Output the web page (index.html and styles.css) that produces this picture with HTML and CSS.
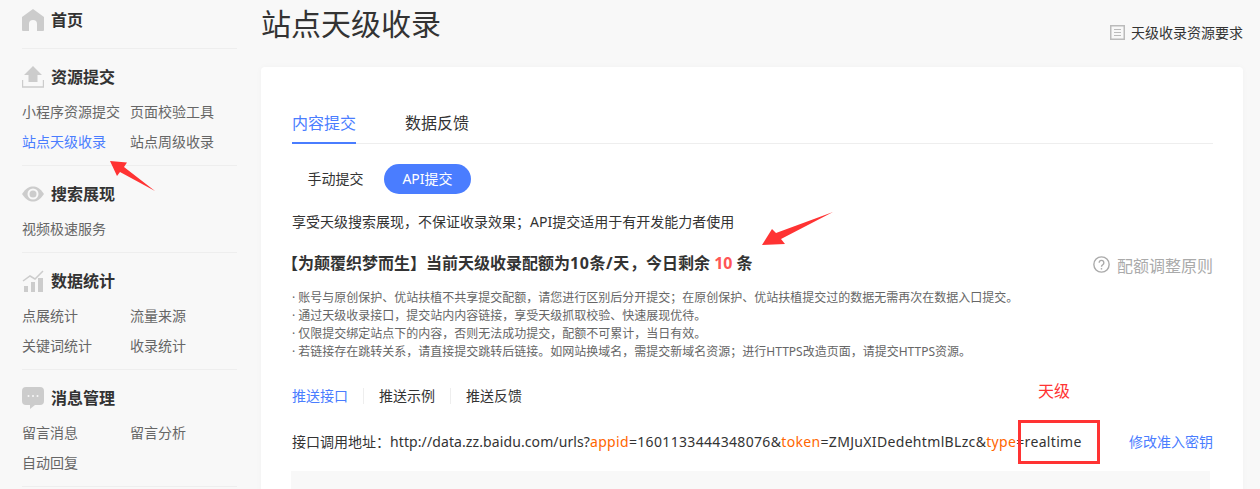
FILE: index.html
```html
<!DOCTYPE html>
<html lang="zh-CN">
<head>
    <meta charset="UTF-8">
    <title>站点天级收录</title>
    <link rel="stylesheet" href="styles.css">
</head>
<body>
    <!-- Sidebar -->
    <div class="sidebar">
        <div class="nav-group nav-home">
            <div class="nav-title">
                <svg class="nav-icon" viewBox="0 0 22 22"><path d="M11 0 L22 8 V21 a1 1 0 0 1 -1 1 H15 V15 a4 4 0 0 0 -8 0 V22 H1 a1 1 0 0 1 -1 -1 V8 Z" fill="#ccc"/></svg>
                <span>首页</span>
            </div>
        </div>
        <div class="nav-group">
            <div class="nav-title">
                <svg class="nav-icon" viewBox="0 0 22 22"><path d="M11 0 L20 9 H15.5 V16 H6.5 V9 H2 Z" fill="#ccc"/><path d="M0.5 14 V21 H21.5 V14" fill="none" stroke="#ccc" stroke-width="1.4"/></svg>
                <span>资源提交</span>
            </div>
            <div class="nav-links">
                <a>小程序资源提交</a><a>页面校验工具</a>
                <a class="active">站点天级收录</a><a>站点周级收录</a>
            </div>
        </div>
        <div class="nav-group">
            <div class="nav-title">
                <svg class="nav-icon" viewBox="0 0 22 22"><path d="M0 11 C4 5 7.500 3.500 11 3.500 S18 5 22 11 C18 17 14.500 18.500 11 18.500 S4 17 0 11 Z" fill="#ccc"/><circle cx="11" cy="11" r="5.500" fill="#f8f8f8"/><circle cx="11" cy="11" r="3.500" fill="#ccc"/></svg>
                <span>搜索展现</span>
            </div>
            <div class="nav-links">
                <a>视频极速服务</a>
            </div>
        </div>
        <div class="nav-group">
            <div class="nav-title">
                <svg class="nav-icon" viewBox="0 0 22 22"><path d="M1 11 L8 6 L13 9 L21 1" fill="none" stroke="#ccc" stroke-width="1.500"/><path d="M2 16 H6 V22 H2 Z M9 12 H13 V22 H9 Z M16 8 H21 V22 H16 Z" fill="#ccc"/></svg>
                <span>数据统计</span>
            </div>
            <div class="nav-links">
                <a>点展统计</a><a>流量来源</a>
                <a>关键词统计</a><a>收录统计</a>
            </div>
        </div>
        <div class="nav-group">
            <div class="nav-title">
                <svg class="nav-icon" viewBox="0 0 22 22"><path d="M4 0 H18 a4 4 0 0 1 4 4 V14 a4 4 0 0 1 -4 4 H13 L8 22 V18 H4 a4 4 0 0 1 -4 -4 V4 a4 4 0 0 1 4 -4 Z" fill="#ccc"/><circle cx="6.500" cy="9" r="1" fill="#f8f8f8"/><circle cx="11" cy="9" r="1" fill="#f8f8f8"/><circle cx="15.500" cy="9" r="1" fill="#f8f8f8"/></svg>
                <span>消息管理</span>
            </div>
            <div class="nav-links">
                <a>留言消息</a><a>留言分析</a>
                <a>自动回复</a>
            </div>
        </div>
    </div>

    <div class="main">
        <div class="page-head">
            <h1>站点天级收录</h1>
            <a class="require">
                <svg class="require-icon" viewBox="0 0 15 15"><rect x="0.750" y="0.750" width="13.500" height="13.500" fill="none" stroke="#bbb" stroke-width="1.500"/><path d="M4 4.500 H11 M4 7.500 H11 M4 10.500 H11" stroke="#bbb" stroke-width="1.200"/></svg>
                天级收录资源要求
            </a>
        </div>

        <div class="card">
            <div class="tabs">
                <a class="tab active">内容提交</a>
                <a class="tab">数据反馈</a>
            </div>

            <div class="pills">
                <a class="pill">手动提交</a>
                <a class="pill active">API提交</a>
            </div>

            <p class="intro">享受天级搜索展现，不保证收录效果；API提交适用于有开发能力者使用</p>

            <div class="quota">
                <div class="quota-text">【为颠覆织梦而生】当前天级收录配额为<span class="quota-num">10条/天</span>，今日剩余 <em>10</em> 条</div>
                <a class="quota-rule">
                    <svg class="rule-icon" viewBox="0 0 16 16"><circle cx="8" cy="8" r="7.200" fill="none" stroke="#aaa" stroke-width="1.300"/><path d="M5.800 6.300 a2.200 2.200 0 1 1 3.400 1.900 c-0.800 0.500 -1.200 0.900 -1.200 1.800" fill="none" stroke="#aaa" stroke-width="1.300"/><circle cx="8" cy="12" r="0.800" fill="#aaa"/></svg>
                    配额调整原则
                </a>
            </div>

            <ul class="notes">
                <li>账号与原创保护、优站扶植不共享提交配额，请您进行区别后分开提交；在原创保护、优站扶植提交过的数据无需再次在数据入口提交。</li>
                <li>通过天级收录接口，提交站内内容链接，享受天级抓取校验、快速展现优待。</li>
                <li>仅限提交绑定站点下的内容，否则无法成功提交，配额不可累计，当日有效。</li>
                <li>若链接存在跳转关系，请直接提交跳转后链接。如网站换域名，需提交新域名资源；进行HTTPS改造页面，请提交HTTPS资源。</li>
            </ul>

            <div class="subnav">
                <a class="active">推送接口</a>
                <a>推送示例</a>
                <a>推送反馈</a>
            </div>

            <div class="api-row">
                <div class="api-url"><span class="api-label">接口调用地址：</span><span class="api-host">http://data.zz.baidu.com/urls?</span><span class="api-key-name">appid</span>=1601133444348076&amp;<span class="api-key-name">token</span>=ZMJuXIDedehtmlBLzc&amp;<span class="api-key-name">type</span>=realtime</div>
                <a class="api-key">修改准入密钥</a>
            </div>

            <div class="code-box">
                <span class="code-word">推送接口</span><span>天级</span>
            </div>
        </div>
    </div>

    <!-- Red annotations drawn on the screenshot -->
    <svg class="marks" viewBox="0 0 1260 489">
        <path d="M110 161 L127 162.500 L124 167 L155 191 L120 172 L117 176 Z" fill="#f33"/>
        <path d="M762 245 L772 229 L776 233 L833 212 L781 239 L785 244 Z" fill="#f33"/>
        <rect x="1019.500" y="421.500" width="79" height="41" fill="none" stroke="#f33" stroke-width="3"/>
    </svg>
    <div class="mark-label">天级</div>
</body>
</html>
```

FILE: styles.css
```css
* {
    box-sizing: border-box;
}

html, body {
    height: 489px;
    overflow: hidden;
}

body {
    margin: 0;
    display: flex;
    position: relative;
    background-color: #f8f8f8;
    color: #333;
    font-family: "Noto Sans", "Noto Sans CJK SC", sans-serif;
    font-size: 14px;
}

a {
    cursor: pointer;
}

.sidebar {
    width: 215px;
    margin-left: 22px;
    flex-shrink: 0;
}

.nav-group {
    border-bottom: 1px solid #eee;
    padding: 16px 0 8px;
}

.nav-home {
    height: 49px;
    padding: 8px 0 0;
}

.nav-title {
    display: flex;
    align-items: center;
    height: 24px;
    font-size: 16px;
    font-weight: bold;
    color: #333;
}

.nav-title span {
    margin-bottom: 2px;
}

.nav-icon {
    width: 22px;
    height: 22px;
    margin-right: 7px;
}

.nav-links {
    display: grid;
    grid-template-columns: 108px 1fr;
    margin-top: 8px;
}

.nav-links a {
    height: 30px;
    line-height: 30px;
    color: #666;
    white-space: nowrap;
}

.nav-links a.active {
    color: #4a7dff;
}

.main {
    width: 982px;
    margin-left: 24px;
    flex-shrink: 0;
}

.page-head {
    display: flex;
    justify-content: space-between;
    height: 67px;
}

h1 {
    margin: 0;
    font-size: 30px;
    font-weight: normal;
    line-height: 48px;
    color: #333;
}

.require {
    display: flex;
    align-items: center;
    height: 20px;
    margin-top: 22px;
    color: #333;
}

.require-icon {
    width: 15px;
    height: 15px;
    margin-right: 6px;
}

.card {
    background: white;
    border-radius: 4px;
    box-shadow: 0 0 6px rgba(0, 0, 0, 0.03);
    padding: 33px 30px 0 31px;
    height: 460px;
}

.tabs {
    display: flex;
    gap: 49px;
    height: 44px;
    border-bottom: 1px solid #eee;
}

.tab {
    font-size: 16px;
    line-height: 46px;
    height: 44px;
    color: #333;
}

.tab.active {
    color: #4a7dff;
    border-bottom: 2px solid #4a7dff;
}

.pills {
    display: flex;
    gap: 5px;
    margin-top: 20px;
}

.pill {
    width: 87px;
    height: 30px;
    line-height: 30px;
    text-align: center;
    border-radius: 15px;
    color: #333;
}

.pill.active {
    background-color: #4a7dff;
    color: white;
}

.intro {
    margin: 18px 0 0;
    line-height: 20px;
    color: #333;
}

.quota {
    display: flex;
    justify-content: space-between;
    margin-top: 19px;
    height: 24px;
}

.quota-text {
    margin-left: -10px;
    font-size: 16px;
    line-height: 24px;
    font-weight: bold;
    color: #333;
}

.quota-num {
    letter-spacing: 0.6px;
}

.quota-text em {
    font-style: normal;
    color: #f55;
}

.quota-rule {
    display: flex;
    align-items: center;
    margin-top: 3px;
    font-size: 16px;
    color: #aaa;
}

.rule-icon {
    width: 17px;
    height: 17px;
    margin-right: 7px;
}

.notes {
    margin: 14px 0 0;
    padding: 0;
    list-style: none;
    font-size: 12px;
    line-height: 18px;
    color: #666;
}

.notes li::before {
    content: "· ";
}

.subnav {
    display: flex;
    margin-top: 27px;
    height: 16px;
    line-height: 16px;
}

.subnav a {
    padding-right: 15px;
    margin-right: 15px;
    border-right: 1px solid #eee;
    color: #333;
}

.subnav a:last-child {
    border-right: none;
}

.subnav a.active {
    color: #4a7dff;
}

.api-row {
    display: flex;
    justify-content: space-between;
    margin-top: 28px;
    line-height: 20px;
}

.api-url {
    letter-spacing: 0.33px;
}

.api-label {
    letter-spacing: 0;
}

.api-host {
    letter-spacing: 0.1px;
}

.api-key-name {
    color: #f60;
}

.api-key {
    color: #4a7dff;
}

.code-box {
    margin-top: 19px;
    background-color: #f8f8f8;
    height: 60px;
    margin-left: -1px;
    margin-right: 3px;
    padding: 15px 24px;
    line-height: 20px;
    color: #333;
}

.code-word {
    margin-right: 159px;
}

.marks {
    position: absolute;
    left: 0;
    top: 0;
    width: 1260px;
    height: 489px;
    pointer-events: none;
}

.mark-label {
    position: absolute;
    left: 1038px;
    top: 378px;
    font-size: 16px;
    color: #f33;
}
```
